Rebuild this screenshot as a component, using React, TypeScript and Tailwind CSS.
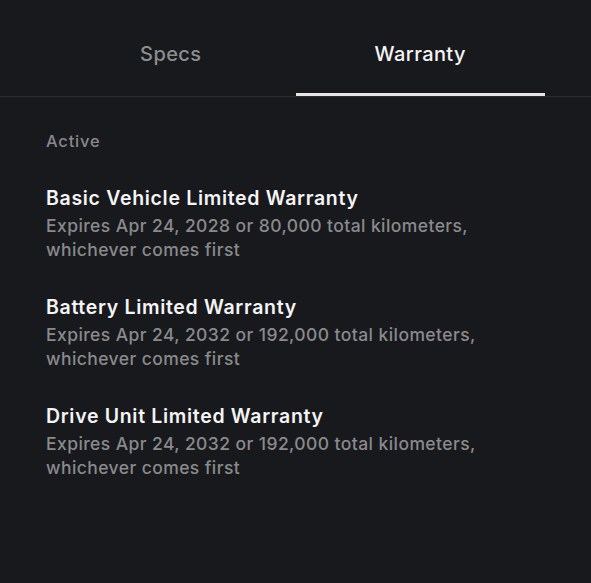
import React, { useState } from 'react'

const warranties = [
    {
        title: 'Basic Vehicle Limited Warranty',
        detail: 'Expires Apr 24, 2028 or 80,000 total kilometers, whichever comes first',
    },
    {
        title: 'Battery Limited Warranty',
        detail: 'Expires Apr 24, 2032 or 192,000 total kilometers, whichever comes first',
    },
    {
        title: 'Drive Unit Limited Warranty',
        detail: 'Expires Apr 24, 2032 or 192,000 total kilometers, whichever comes first',
    },
]

function App() {
    const [tab, setTab] = useState<'specs' | 'warranty'>('warranty')

    return (
        <div
            className="min-h-screen bg-[#18191c] text-[#f2f2f3]"
            style={{ fontFamily: 'Inter, "Noto Sans", sans-serif' }}
        >
            {/* Tabs */}
            <div className="border-b border-[#2c2d30]">
                <div className="flex px-[46px]">
                    {(['specs', 'warranty'] as const).map(key => (
                        <button
                            key={key}
                            onClick={() => setTab(key)}
                            className={`flex-1 pt-[40px] pb-[25px] text-[20px] leading-[28px] font-medium tracking-[0.4px] border-b-[3px] ${
                                tab === key
                                    ? 'text-[#f4f4f5] border-[#e6e6e6]'
                                    : 'text-[#8d8d90] border-transparent'
                            }`}
                        >
                            {key === 'specs' ? 'Specs' : 'Warranty'}
                        </button>
                    ))}
                </div>
            </div>

            {/* Content */}
            <div className="px-[46px] pt-[32px]">
                <p className="text-[16.5px] leading-[24px] font-medium tracking-[0.8px] text-[#88888b]">Active</p>

                <div className="flex flex-col gap-[30px] mt-[30px] max-w-[450px]">
                    {warranties.map(w => (
                        <div key={w.title}>
                            <h3 className="text-[19.5px] leading-[30px] font-semibold tracking-[0.68px] text-[#f4f4f5] mb-[1px]">
                                {w.title}
                            </h3>
                            <p className="text-[17.5px] leading-[24px] font-medium tracking-[0.42px] text-[#8a8a8d]">
                                {w.detail}
                            </p>
                        </div>
                    ))}
                </div>
            </div>
        </div>
    )
}

export default App
